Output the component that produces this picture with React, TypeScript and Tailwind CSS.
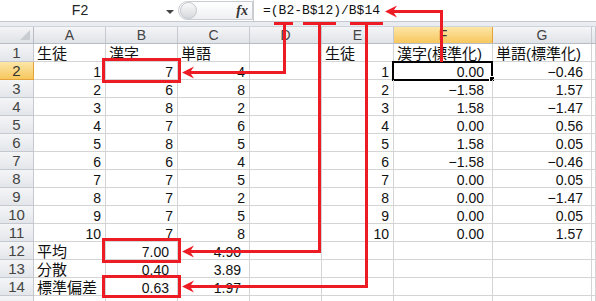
import clsx from "clsx";

const RED = "#ed1c24";

type Cell = { v: string; num?: boolean; dec?: boolean; cjk?: boolean };

const t = (v: string): Cell => ({ v, cjk: true });
const n = (v: string): Cell => ({ v, num: true });
const d = (v: string): Cell => ({ v, num: true, dec: true });
const e: Cell = { v: "" };

const colB = ["7", "6", "8", "7", "8", "6", "7", "7", "7", "7"];
const colC = ["4", "8", "2", "6", "5", "4", "5", "2", "5", "8"];
const colF = ["0.00", "−1.58", "1.58", "0.00", "1.58", "−1.58", "0.00", "0.00", "0.00", "0.00"];
const colG = ["−0.46", "1.57", "−1.47", "0.56", "0.05", "−0.46", "0.05", "−1.47", "0.05", "1.57"];

const rows: Cell[][] = [
  [t("生徒"), t("漢字"), t("単語"), e, t("生徒"), t("漢字(標準化)"), t("単語(標準化)"), e],
  ...colB.map((b, i) => [n(String(i + 1)), n(b), n(colC[i]), e, n(String(i + 1)), d(colF[i]), d(colG[i]), e]),
  [t("平均"), d("7.00"), d("4.90"), e, e, e, e, e],
  [t("分散"), d("0.40"), d("3.89"), e, e, e, e, e],
  [t("標準偏差"), d("0.63"), d("1.97"), e, e, e, e, e],
  [e, e, e, e, e, e, e, e],
];

const widths = ["w-[72px]", "w-[72px]", "w-[72px]", "w-[72px]", "w-[72px]", "w-[99px]", "w-[99px]", "flex-1"];
const letters = ["A", "B", "C", "D", "E", "F", "G", ""];

function FormulaBar() {
  return (
    <div className="flex h-[22px] border-b border-[#c5c9cf] bg-white">
      {/* name box */}
      <div className="relative flex w-[178px] items-center">
        <span className="w-[160px] text-center text-[14px] text-[#222]">F2</span>
        <span className="absolute left-[166px] top-[10px] h-0 w-0 border-x-[4px] border-t-[4px] border-x-transparent border-t-[#444]" />
      </div>
      {/* fx pill */}
      <div className="my-[1px] flex w-[75px] items-center rounded-l-full border border-[#c9ccd1] bg-gradient-to-b from-white to-[#eef0f3]">
        <span className="ml-[1px] h-[17px] w-[17px] rounded-full border border-[#c3c6cb] bg-gradient-to-b from-[#fafafa] to-[#d6d9dd]" />
        <span className="ml-auto mr-[4px] font-['Liberation_Serif',serif] text-[14px] font-bold italic text-[#333]">
          fx
        </span>
      </div>
      {/* formula */}
      <div className="flex flex-1 items-center border-l border-[#c9ccd1] pl-[9px] font-['Liberation_Mono',monospace] text-[13px] text-[#111]">
        =(B2-B$12)/B$14
      </div>
    </div>
  );
}

function HeaderRow() {
  return (
    <div className="flex h-[17px] border-b border-[#b7bcc4]">
      <div className="relative w-[34px] border-r border-[#b7bcc4] bg-gradient-to-b from-[#f3f4f6] to-[#dfe2e6]">
        <span className="absolute bottom-[3px] right-[3px] h-0 w-0 border-b-[10px] border-l-[10px] border-b-[#c9cdd2] border-l-transparent" />
      </div>
      {letters.map((l, i) => (
        <div
          key={i}
          className={clsx(
            "flex items-center justify-center border-r text-[14px] leading-none",
            widths[i],
            l === "F"
              ? "border-[#e3a23a] bg-gradient-to-b from-[#fde6a6] to-[#f6c75c] text-[#333]"
              : "border-[#c5c9cf] bg-gradient-to-b from-[#f4f5f7] to-[#e0e3e7] text-[#444]"
          )}
        >
          {l}
        </div>
      ))}
    </div>
  );
}

function Row({ cells, idx }: { cells: Cell[]; idx: number }) {
  const sel = idx === 2;
  return (
    <div className="flex h-[18px] shrink-0">
      <div
        className={clsx(
          "flex w-[34px] items-center justify-center border-b border-r text-[15px] leading-none",
          sel
            ? "border-[#e3a23a] bg-gradient-to-b from-[#fde6a6] to-[#f6c75c] text-[#333]"
            : "border-[#c5c9cf] bg-gradient-to-b from-[#f4f5f7] to-[#e3e6ea] text-[#444]"
        )}
      >
        {idx < 15 ? idx : ""}
      </div>
      {cells.map((c, i) => (
        <div
          key={i}
          className={clsx(
            "relative flex items-end whitespace-nowrap border-b border-r border-[#d4d4d4] text-[#111]",
            widths[i],
            c.num ? "justify-end" : "justify-start pl-[3px]",
            c.num && (c.dec ? "pr-[8px]" : "pr-[4px]")
          )}
        >
          <span className={clsx("leading-[14px]", c.cjk ? "text-[15px]" : "text-[14px]")}>{c.v}</span>
          {sel && i === 5 && (
            <>
              <span className="absolute -left-[2px] -top-[1px] h-[20px] w-[101px] border-2 border-black" />
              <span className="absolute -bottom-[3px] -right-[3px] h-[6px] w-[6px] border border-white bg-black" />
            </>
          )}
        </div>
      ))}
    </div>
  );
}

function Annotations() {
  return (
    <svg className="pointer-events-none absolute left-0 top-0" width="596" height="301" viewBox="0 0 596 301">
      <g stroke={RED} strokeWidth="3" fill="none" strokeLinejoin="miter" strokeLinecap="butt">
        <path d="M274 23.5 H293" />
        <path d="M303 23.5 H336" />
        <path d="M350 23.5 H383" />
        <path d="M284.5 23.5 V72.5 H190" />
        <path d="M319.5 23.5 V251.5 H190" />
        <path d="M366.5 23.5 V286.5 H190" />
        <path d="M441.5 62 V11.5 H393" />
        <rect x="103.5" y="59.5" width="76" height="22" />
        <rect x="103.5" y="239.5" width="76" height="22" />
        <rect x="103.5" y="276.5" width="76" height="20" />
      </g>
      <g fill={RED}>
        <polygon points="182,72.5 194,66.5 190,72.5 194,78.5" />
        <polygon points="182,251.5 194,245.5 190,251.5 194,257.5" />
        <polygon points="182,286.5 194,280.5 190,286.5 194,292.5" />
        <polygon points="385,11.5 397,5.5 393,11.5 397,17.5" />
      </g>
    </svg>
  );
}

export default function App() {
  return (
    <div className="relative h-[301px] w-[596px] overflow-hidden bg-white font-['Liberation_Sans','Noto_Sans_CJK_JP',sans-serif]">
      <FormulaBar />
      <div className="h-[5px] border-b border-[#d0d4da] bg-[#e9ecf0]" />
      <HeaderRow />
      {rows.map((cells, i) => (
        <Row key={i} cells={cells} idx={i + 1} />
      ))}
      <Annotations />
    </div>
  );
}
